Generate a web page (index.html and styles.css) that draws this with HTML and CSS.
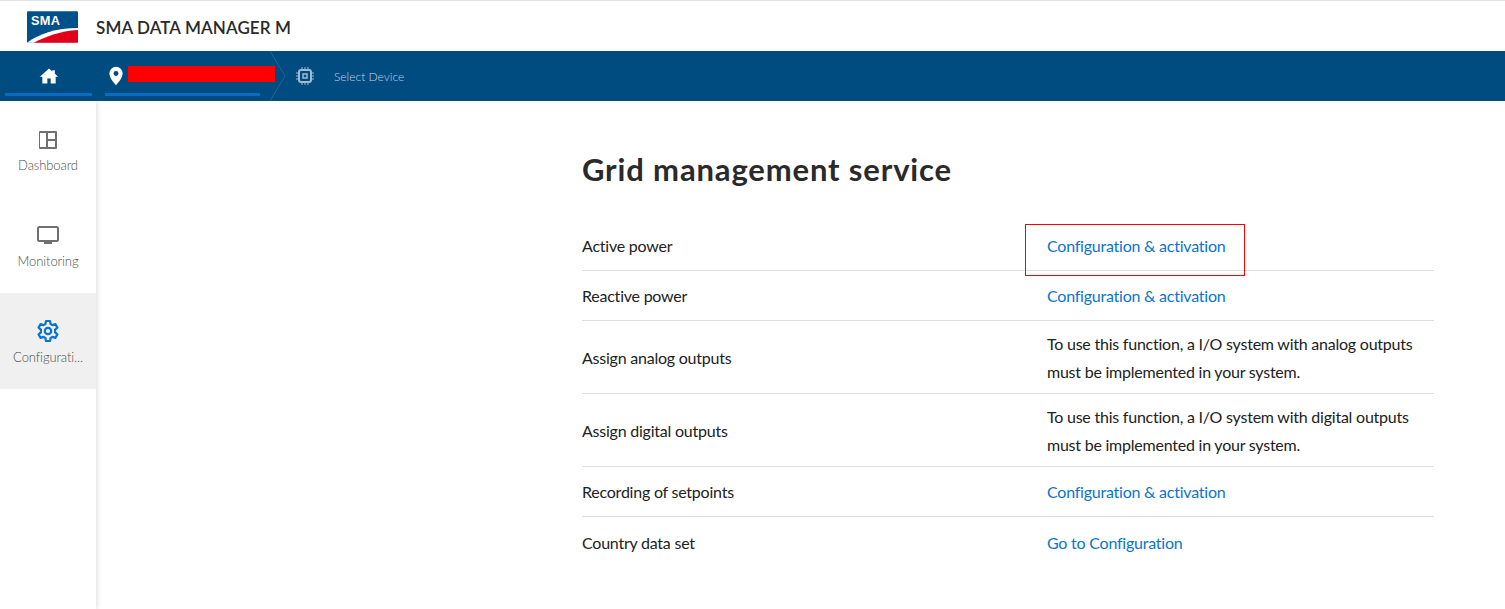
FILE: index.html
```html
<!DOCTYPE html>
<html lang="en">
<head>
<meta charset="utf-8">
<title>SMA Data Manager M</title>
<link rel="stylesheet" href="styles.css">
</head>
<body>
<header class="topbar">
  <svg class="logo" viewBox="0 0 52 32" width="52" height="32" aria-label="SMA logo">
    <path d="M1 0H51a1 1 0 0 1 1 1V31a1 1 0 0 1-1 1H1a1 1 0 0 1-1-1V1a1 1 0 0 1 1-1Z" fill="#00508a"/>
    <path d="M0 32C12 23 30 17 52 17V31a1 1 0 0 1-1 1Z" fill="#fff"/>
    <path d="M7 32C18 26 34 20 52 19V31a1 1 0 0 1-1 1Z" fill="#e2001a"/>
    <text x="4" y="14" class="logo-text">SMA</text>
  </svg>
  <span class="product">SMA DATA MANAGER M</span>
</header>
<nav class="navbar">
  <a class="nav-home">
    <svg viewBox="0 0 24 24" width="20" height="20"><path d="M12 3 1 13h3v8h6v-6h4v6h6v-8h3l-4-3.600V5h-3v1.700Z" fill="#fff"/></svg>
  </a>
  <a class="nav-site">
    <svg viewBox="0 0 24 24" width="22" height="22"><path fill-rule="evenodd" d="M12 2a7.200 7.200 0 0 0-7.200 7.200C4.800 14.600 12 22 12 22s7.200-7.400 7.200-12.800A7.200 7.200 0 0 0 12 2Zm0 4.600a2.700 2.700 0 1 1 0 5.400 2.700 2.700 0 0 1 0-5.400Z" fill="#fff"/></svg>
    <span class="redaction"></span>
  </a>
  <svg class="chevron" viewBox="0 0 16 50" width="16" height="50"><path d="M0 0 15 25 0 50" fill="none" stroke="#1f6396" stroke-width="1"/></svg>
  <svg class="chip" viewBox="0 0 18 18" width="18" height="18"><g fill="none" stroke="#9fbbd1"><rect x="3" y="3" width="12" height="12" rx="2" stroke-width="2"/><rect x="7" y="7" width="4" height="4" stroke-width="1.500"/><path d="M6 0v2M9 0v2M12 0v2M6 16v2M9 16v2M12 16v2M0 6h2M0 9h2M0 12h2M16 6h2M16 9h2M16 12h2" stroke-width="1"/></g></svg>
  <span class="select-device">Select Device</span>
</nav>
<div class="layout">
  <aside class="sidebar">
    <a class="side-item">
      <svg viewBox="0 0 20 20" width="20" height="20"><path d="M2 1h16a1 1 0 0 1 1 1v16a1 1 0 0 1-1 1H2a1 1 0 0 1-1-1V2a1 1 0 0 1 1-1Zm0 2v14h6V3Zm8 0v6h7V3Zm0 8v6h7v-6Z" fill="#707070" fill-rule="evenodd"/></svg>
      <span>Dashboard</span>
    </a>
    <a class="side-item">
      <svg viewBox="0 0 22 20" width="22" height="20"><rect x="1" y="1" width="20" height="14" rx="1.500" fill="none" stroke="#707070" stroke-width="2"/><rect x="7" y="16" width="8" height="2" fill="#707070"/></svg>
      <span>Monitoring</span>
    </a>
    <a class="side-item active">
      <svg class="gear" viewBox="0 0 24 24" width="24" height="24"><path fill="none" stroke="#0a74cf" stroke-width="2.200" stroke-linejoin="round" d="M10 2h4l.6 3 1.900 1.100 2.900-1 2 3.500-2.300 2v2.800l2.300 2-2 3.500-2.900-1-1.900 1.100-.6 3h-4l-.6-3-1.900-1.100-2.900 1-2-3.500 2.300-2v-2.800l-2.300-2 2-3.500 2.900 1 1.900-1.100Z"/><circle cx="12" cy="12" r="3.200" fill="none" stroke="#0a74cf" stroke-width="2.200"/></svg>
      <span>Configurati...</span>
    </a>
  </aside>
  <main class="content">
    <h1>Grid management service</h1>
    <div class="rows">
      <div class="row short"><span class="label">Active power</span><a class="link">Configuration &amp; activation</a></div>
      <div class="row short"><span class="label">Reactive power</span><a class="link">Configuration &amp; activation</a></div>
      <div class="row tall"><span class="label">Assign analog outputs</span><span class="text">To use this function, a I/O system with analog outputs<br>must be implemented in your system.</span></div>
      <div class="row tall"><span class="label">Assign digital outputs</span><span class="text">To use this function, a I/O system with digital outputs<br>must be implemented in your system.</span></div>
      <div class="row short"><span class="label">Recording of setpoints</span><a class="link">Configuration &amp; activation</a></div>
      <div class="row short last"><span class="label">Country data set</span><a class="link">Go to Configuration</a></div>
    </div>
  </main>
</div>
<div class="annotation"></div>
</body>
</html>
```
FILE: styles.css
```css
* { box-sizing: border-box; }
html, body { height: 100%; }
body {
  margin: 0;
  font-family: "Lato", "Liberation Sans", sans-serif;
  color: #222;
  background: #fff;
  overflow: hidden;
}
.topbar {
  height: 51px;
  border-top: 1px solid #e3e3e3;
  display: flex;
  align-items: center;
  padding-left: 27px;
  gap: 18px;
}
.logo { flex: none; margin-top: 1px; width: 51px; }
.logo-text { font: 700 13px "Liberation Sans", sans-serif; fill: #fff; letter-spacing: 0.4px; }
.product { font-size: 17px; font-weight: 600; color: #2a2a2a; letter-spacing: 0.12px; margin-top: 2px; }
.navbar {
  height: 50px;
  background: #004b7f;
  display: flex;
  align-items: center;
  position: relative;
  z-index: 2;
}
.nav-home, .nav-site {
  height: 45px;
  border-bottom: 3px solid #0a6cc0;
  display: flex;
  align-items: center;
  align-self: flex-start;
  position: relative;
}
.nav-home { width: 87px; margin-left: 5px; justify-content: center; padding-top: 8px; }
.nav-site { width: 155px; margin-left: 13px; padding-top: 8px; }
.redaction {
  position: absolute;
  left: 23px;
  top: 15px;
  width: 147px;
  height: 16px;
  background: #f00;
}
.chevron { flex: none; margin-left: 10px; }
.chip { flex: none; margin-left: 10px; }
.select-device { font-size: 12px; color: #c0d3e3; margin-left: 20px; font-weight: 300; }
.layout { display: flex; height: calc(100% - 101px); }
.sidebar {
  width: 96px;
  flex: none;
  background: #fff;
  box-shadow: 1px 0 5px rgba(0, 0, 0, 0.14);
}
.side-item {
  height: 96px;
  display: flex;
  flex-direction: column;
  align-items: center;
  padding-top: 29px;
  gap: 7px;
  font-size: 13px;
  font-weight: 300;
  letter-spacing: -0.1px;
  color: #4f4f4f;
}
.side-item svg { height: 20px; }
.side-item svg.gear { height: 24px; margin: -3px 0 -1px; }
.side-item.active { background: #f0f0f0; }
.content { flex: 1; padding: 49px 71px 0 486px; }
h1 {
  margin: 0;
  font-size: 31px;
  line-height: 38px;
  font-weight: 700;
  color: #2a2a2a;
  letter-spacing: 0.85px;
}
.rows { margin-top: 33px; }
.row {
  display: grid;
  grid-template-columns: 465px 1fr;
  align-items: center;
  border-bottom: 1px solid #dedede;
  font-size: 16px;
  line-height: 28px;
  letter-spacing: -0.23px;
  color: #222;
}
.row.short { height: 50px; }
.row.tall { height: 73px; padding-top: 2px; }
.row.last { border-bottom: none; height: 51px; }
.link { color: #0a74cf; }
.annotation {
  position: absolute;
  left: 1025px;
  top: 224px;
  width: 220px;
  height: 52px;
  border: 1px solid #f00;
}
```
